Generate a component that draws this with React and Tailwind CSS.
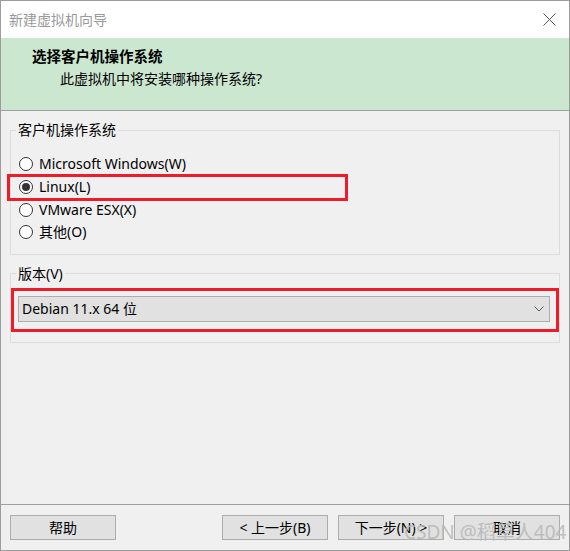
const font = 'font-["Noto_Sans","Noto_Sans_CJK_SC",sans-serif]';

const osOptions = [
  { label: 'Microsoft Windows(W)', checked: false },
  { label: 'Linux(L)', checked: true },
  { label: 'VMware ESX(X)', checked: false },
  { label: '其他(O)', checked: false },
];

function Radio({ label, checked }) {
  return (
    <div className="flex h-[22.7px] items-center">
      <span className="ml-[8px] flex h-[14px] w-[14px] items-center justify-center rounded-full border border-[#333] bg-white">
        {checked && <span className="h-[8px] w-[8px] rounded-full bg-[#333]" />}
      </span>
      <span className="ml-[6px] text-[14px] leading-[20px] text-black">{label}</span>
    </div>
  );
}

function Button({ children }) {
  return (
    <button className="flex h-[25px] w-[106px] items-center justify-center border border-[#adadad] bg-[#e1e1e1] text-[14px] leading-[20px] text-black">
      {children}
    </button>
  );
}

export default function App() {
  return (
    <div className={`relative flex h-[551px] w-[570px] flex-col border border-[#9c9c9c] bg-[#f0f0f0] ${font}`}>
      {/* title bar */}
      <div className="flex h-[37px] items-center justify-between bg-white pl-[8px] pr-[12px]">
        <span className="text-[14px] leading-[20px] text-[#999]">新建虚拟机向导</span>
        <svg width="13" height="13" viewBox="0 0 13 13" className="mr-[1px]">
          <path d="M0.5 0.5 L12.5 12.5 M12.5 0.5 L0.5 12.5" stroke="#555" strokeWidth="1" fill="none" />
        </svg>
      </div>

      {/* header */}
      <div className="h-[73px] border-b border-[#a0a0a0] bg-[#cce7d0] pl-[31px] pt-[8px]">
        <div className="text-[14.5px] font-bold leading-[20px] text-black">选择客户机操作系统</div>
        <div className="mt-[3px] pl-[28px] text-[14px] leading-[20px] text-black">此虚拟机中将安装哪种操作系统?</div>
      </div>

      {/* body */}
      <div className="flex flex-1 flex-col px-[9px]">
        <fieldset className="mt-[9px] border border-[#dcdcdc] pb-[10px]">
          <legend className="ml-[5px] px-[2px] text-[14px] leading-[20px] text-black">客户机操作系统</legend>
          <div className="mt-[13px] flex flex-col">
            {osOptions.map((o) => (
              <Radio key={o.label} {...o} />
            ))}
          </div>
        </fieldset>

        <fieldset className="mt-[9px] border border-[#dcdcdc] pb-[20px]">
          <legend className="ml-[5px] px-[2px] text-[14px] leading-[20px] text-black">版本(V)</legend>
          <div className="ml-[7px] mr-[9px] mt-[12px] flex h-[26px] items-center justify-between border border-[#adadad] bg-[#e1e1e1] pl-[3px] pr-[5px]">
            <span className="text-[14px] leading-[20px] text-black">Debian 11.x 64 位</span>
            <svg width="10" height="6" viewBox="0 0 10 6">
              <path d="M0.5 0.5 L5 5 L9.5 0.5" stroke="#555" strokeWidth="1" fill="none" />
            </svg>
          </div>
        </fieldset>
      </div>

      {/* footer */}
      <div className="flex h-[46px] items-start justify-between border-t border-[#a0a0a0] px-[9px] pt-[10px]">
        <Button>帮助</Button>
        <div className="flex gap-[10px]">
          <Button>&lt; 上一步(B)</Button>
          <Button>下一步(N) &gt;</Button>
          <Button>取消</Button>
        </div>
      </div>

      {/* annotations */}
      <div className="pointer-events-none absolute left-[6px] top-[173px] h-[27px] w-[341px] border-[3px] border-[#ec1c2a]" />
      <div className="pointer-events-none absolute left-[10px] top-[287px] h-[44px] w-[548px] border-[3px] border-[#ec1c2a]" />
      <div className="pointer-events-none absolute left-[403px] top-[518px] text-[19px] leading-[26px] text-[#b8b8b8]/90">
        CSDN @稻草人404
      </div>
    </div>
  );
}
